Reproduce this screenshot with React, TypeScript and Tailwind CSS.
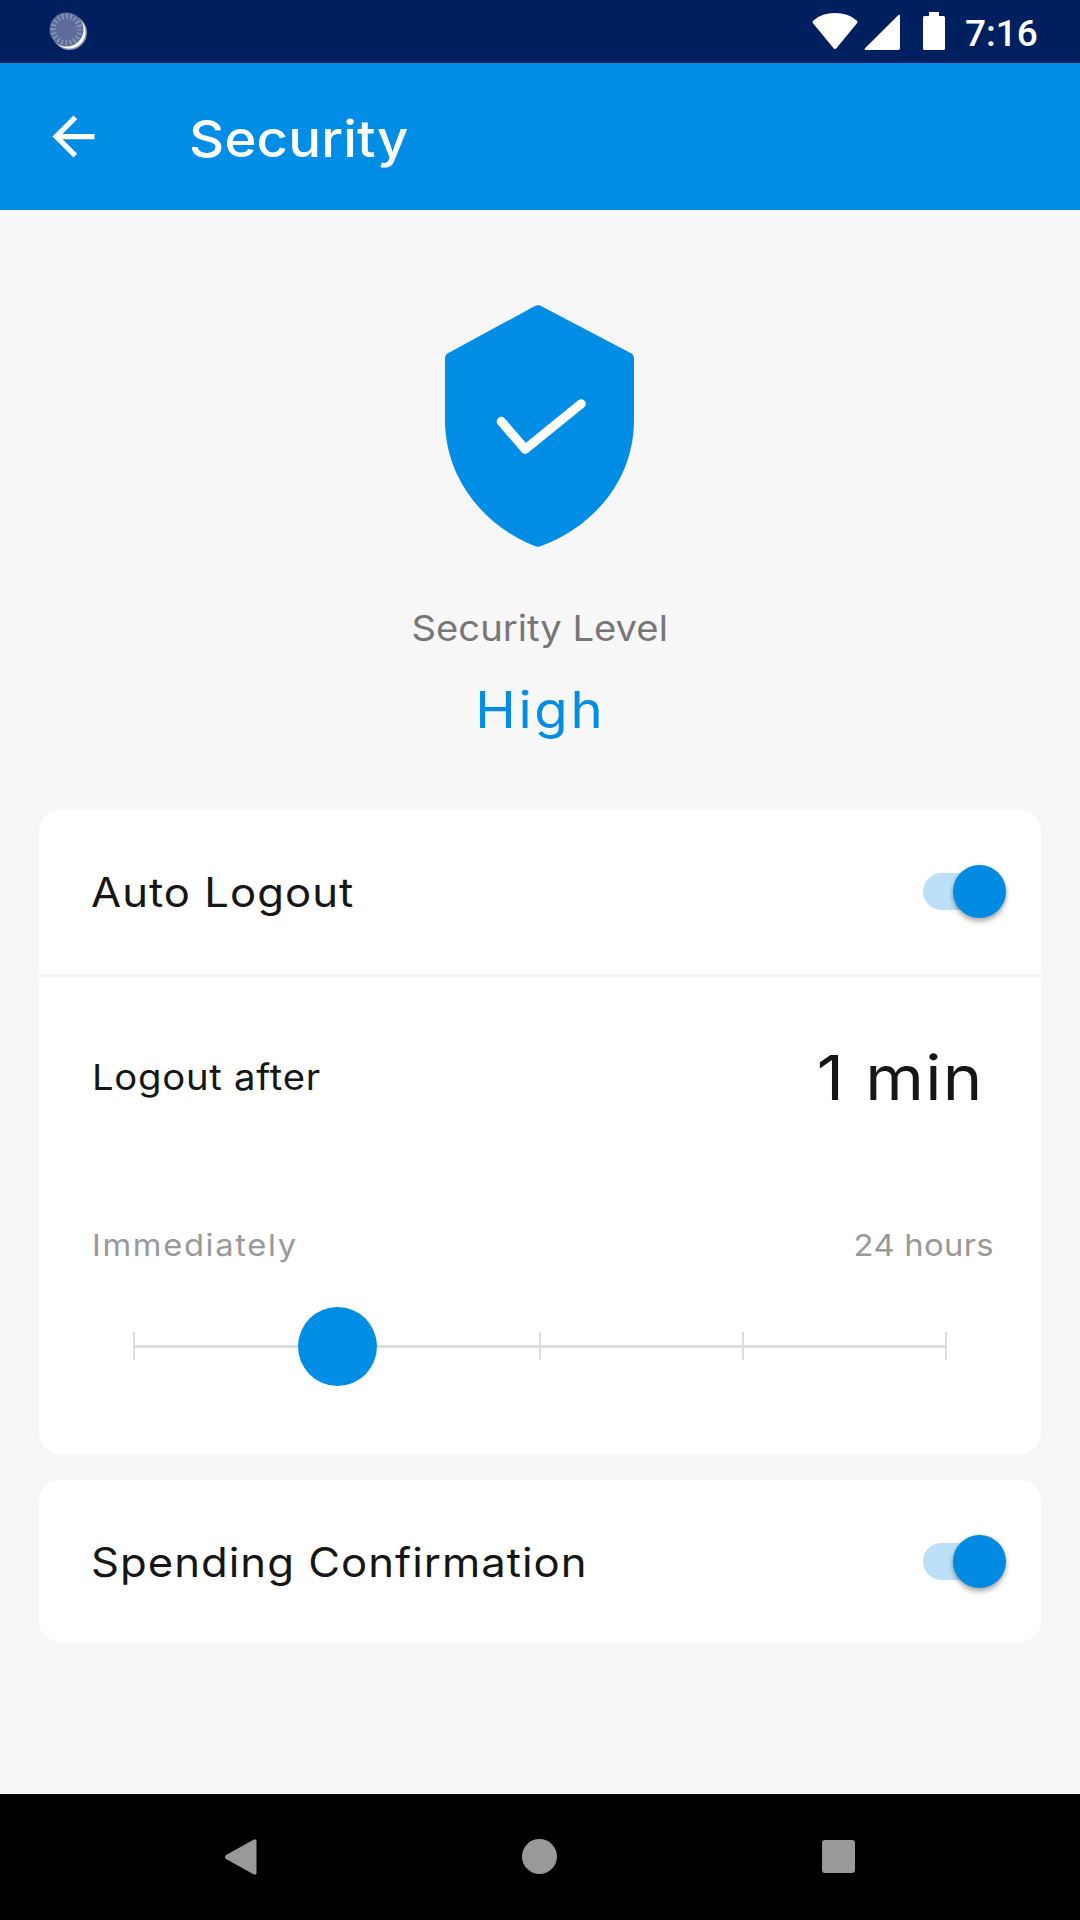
import React from 'react';

function StatusBar() {
  return (
    <div className="flex h-[63px] items-start bg-[#001f5f] pl-[49px] pr-[42px]">
      <svg className="mt-[12px]" width="40" height="40" viewBox="0 0 40 40">
        <circle cx="20.5" cy="20.5" r="17.5" fill="#8c96b4" />
        <circle cx="20" cy="20" r="16.5" fill="#fff" />
        <circle cx="17.5" cy="17.5" r="17" fill="#5d6c98" />
        <circle cx="17.5" cy="17.5" r="13.2" fill="none" stroke="#8d9bb8" strokeWidth="5.4" strokeDasharray="1.5 2.647" strokeDashoffset="0.75" />
      </svg>
      <svg className="ml-auto mt-[12px]" width="134" height="40" viewBox="0 0 134 40" fill="#fff">
        <path d="M1 11.2Q-.2 9.8 1.3 8.4Q10 1 23 1T44.7 8.4Q46.2 9.8 45 11.2L24.6 36Q23 38 21.4 36Z" />
        <path d="M53 36.2L86.2 3.3Q88 2 88 4.5V36.2Q88 38 86.2 38H54Q52 37.6 53 36.2Z" />
        <path d="M117 0H127V4H131.5Q133 4 133 5.5V36.5Q133 38 131.5 38H112.5Q111 38 111 36.5V5.5Q111 4 112.5 4H117Z" />
      </svg>
      <span className="ml-[19px] mt-[9px] w-[73px] whitespace-nowrap font-['Roboto',sans-serif] text-[37px] font-medium leading-[50px] text-white">7:16</span>
    </div>
  );
}

function Header() {
  return (
    <header className="flex h-[147px] items-center bg-[#008de6] pl-[42px] text-white">
      <svg width="63" height="63" viewBox="0 0 24 24" fill="currentColor">
        <path d="M20 11H7.83l5.59-5.59L12 4l-8 8 8 8 1.41-1.41L7.83 13H20z" />
      </svg>
      <h1 className="ml-[84px] mt-[4px] origin-left scale-x-[1.08] text-[50.5px] font-medium leading-[60px] tracking-[0.16px]">Security</h1>
    </header>
  );
}

function Shield() {
  return (
    <svg className="mt-[95px]" width="190" height="242" viewBox="0 0 190 242">
      <path
        d="M90 1Q93 -.5 96 1L186.5 48.5Q189 50 189 53V115C189 176 147 222 97.5 240.5L93 242L88.5 240.5C42 222 0 176 0 115V53Q0 50 2.5 48.5Z"
        fill="#008de6"
      />
      <path d="M56.3 116.4L80.2 144.3L136.2 98.8" fill="none" stroke="#fff" strokeWidth="9.2" strokeLinecap="round" strokeLinejoin="round" />
    </svg>
  );
}

function Toggle() {
  return (
    <div role="switch" aria-checked="true" className="flex h-[53px] w-[83px] items-center">
      <div className="h-[37px] w-[74px] rounded-full bg-[#bde0f9]" />
      <div className="-ml-[44px] size-[53px] shrink-0 rounded-full bg-[#008ae1] shadow-[0_4px_5px_rgba(0,0,0,0.28),0_0_4px_rgba(0,0,0,0.14)]" />
    </div>
  );
}

function Slider() {
  return (
    <div className="relative mx-[94px] mt-[42px] flex h-[79px] items-center">
      <div className="h-[3px] w-full bg-[#ddd]" />
      <div className="absolute inset-x-0 top-[25px] flex justify-between">
        {[0, 1, 2, 3, 4].map((i) => (
          <div key={i} className="h-[28px] w-[2px] bg-[#ddd]" />
        ))}
      </div>
      <div className="absolute left-[165px] top-0 size-[79px] rounded-full bg-[#008de6]" />
    </div>
  );
}

function NavBar() {
  return (
    <nav className="flex h-[126px] items-center justify-between bg-black pb-[1px] pl-[224px] pr-[225px]">
      <svg width="33" height="36" viewBox="0 0 33 36" fill="#999">
        <path d="M29.5 .8Q32.5 -.6 32.5 2.5V33.5Q32.5 36.6 29.5 35.2L2 20Q0 18 2 16Z" />
      </svg>
      <div className="size-[35px] rounded-full bg-[#999]" />
      <div className="size-[33px] rounded-[3px] bg-[#999]" />
    </nav>
  );
}

export default function App() {
  return (
    <div className="flex h-[1920px] w-[1080px] flex-col overflow-hidden bg-[#f7f7f7] font-['Inter',sans-serif] font-normal text-[#161616]">
      <StatusBar />
      <Header />
      <main className="flex flex-1 flex-col px-[39px]">
        <section className="flex h-[600px] flex-col items-center">
          <Shield />
          <p className="mt-[57px] scale-x-[1.08] text-[35.4px] leading-[50px] text-[#777]">Security Level</p>
          <p className="mt-[26px] scale-x-[1.08] text-[50.5px] leading-[60px] tracking-[2.5px] text-[#008de6]">High</p>
        </section>
        <section className="h-[644px] rounded-[21px] bg-white">
          <div className="flex h-[167px] items-center justify-between border-b-[3px] border-[#f5f5f5] pb-px pl-[52px] pr-[35px]">
            <span className="mt-[2px] origin-left scale-x-[1.08] text-[40.4px] leading-[50px] tracking-[0.96px]">Auto Logout</span>
            <Toggle />
          </div>
          <div className="mt-[61px] flex h-[80px] items-center justify-between pl-[53px] pr-[57px]">
            <span className="origin-left scale-x-[1.08] text-[35.4px] leading-[50px] tracking-[0.7px]">Logout after</span>
            <span className="origin-right scale-x-[1.08] text-[62px] leading-[80px] tracking-[1.2px]">1 min</span>
          </div>
          <div className="mt-[107px] flex h-[40px] items-center justify-between pl-[53px] pr-[47px] text-[30.3px] leading-[40px] text-[#999]">
            <span className="origin-left scale-x-[1.08] tracking-[1.55px]">Immediately</span>
            <span className="origin-right scale-x-[1.08] tracking-[0.3px]">24 hours</span>
          </div>
          <Slider />
        </section>
        <section className="mt-[26px] flex h-[162px] items-center justify-between rounded-[21px] bg-white pl-[52px] pr-[35px]">
          <span className="mt-[3px] origin-left scale-x-[1.08] text-[40.4px] leading-[50px] tracking-[0.95px]">Spending Confirmation</span>
          <Toggle />
        </section>
      </main>
      <NavBar />
    </div>
  );
}
